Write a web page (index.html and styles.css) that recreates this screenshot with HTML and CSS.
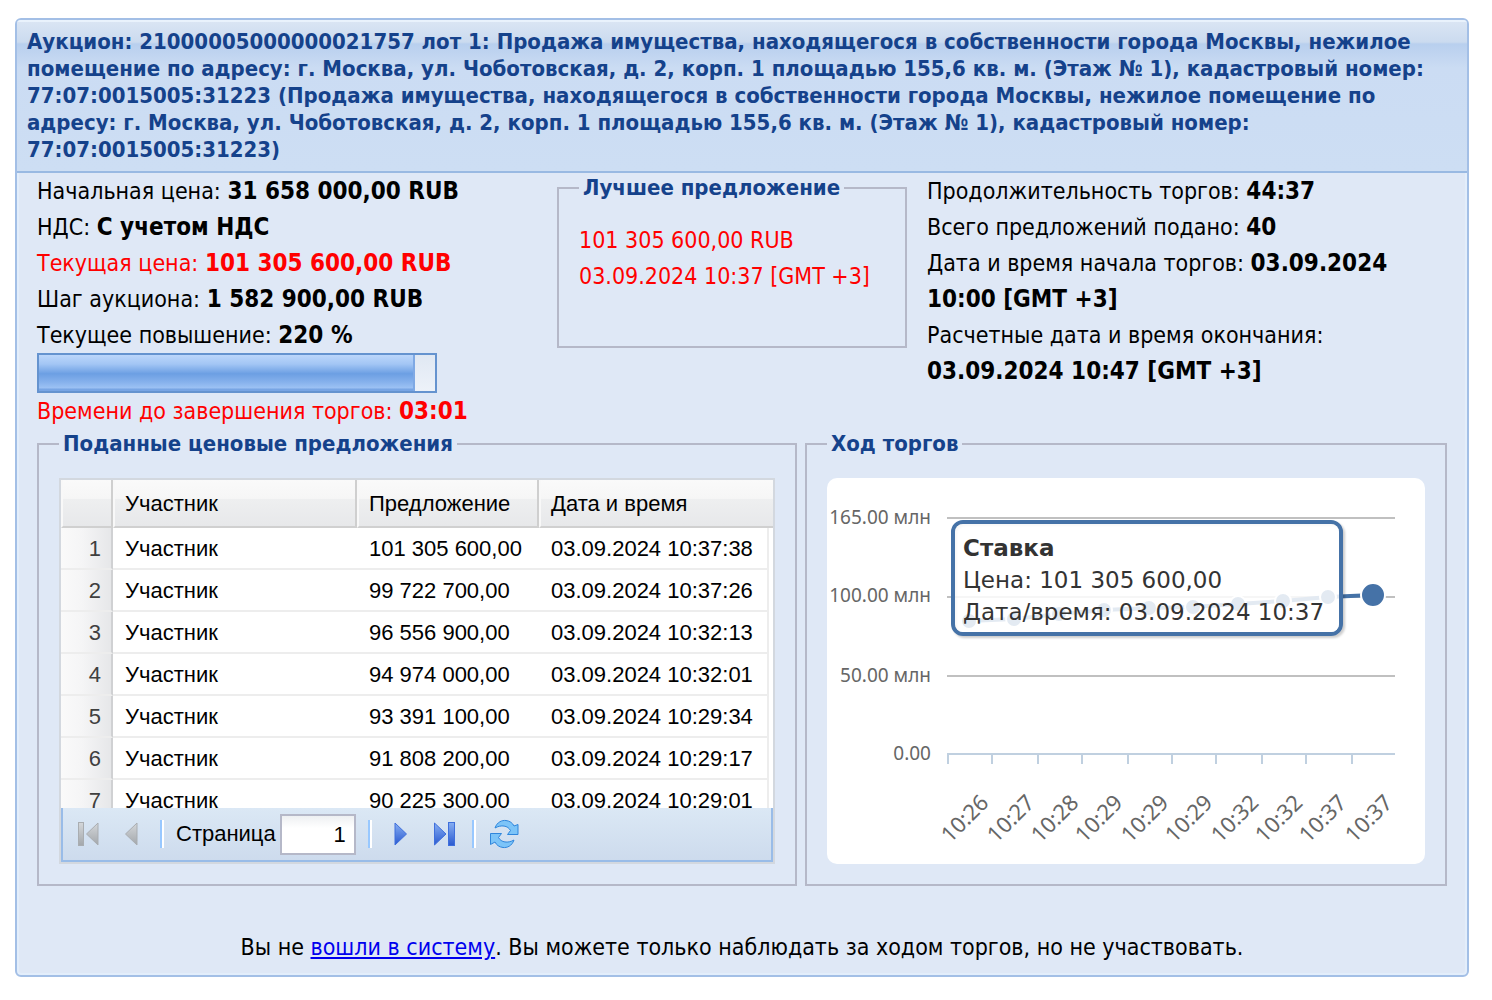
FILE: index.html
```html
<!DOCTYPE html>
<html lang="ru">
<head>
<meta charset="utf-8">
<title>Аукцион</title>
<link rel="stylesheet" href="styles.css">
</head>
<body>
<main class="panel">
  <h1 class="panel-title">Аукцион: 21000005000000021757 лот 1: Продажа имущества, находящегося в собственности города Москвы, нежилое помещение по адресу: г. Москва, ул. Чоботовская, д. 2, корп. 1 площадью 155,6 кв. м. (Этаж № 1), кадастровый номер: 77:07:0015005:31223 (Продажа имущества, находящегося в собственности города Москвы, нежилое помещение по адресу: г. Москва, ул. Чоботовская, д. 2, корп. 1 площадью 155,6 кв. м. (Этаж № 1), кадастровый номер: 77:07:0015005:31223)</h1>
  <div class="panel-body">
    <div class="summary">
      <section>
        <p>Начальная цена: <b>31 658 000,00 RUB</b></p>
        <p>НДС: <b>С учетом НДС</b></p>
        <p class="alert">Текущая цена: <b>101 305 600,00 RUB</b></p>
        <p>Шаг аукциона: <b>1 582 900,00 RUB</b></p>
        <p>Текущее повышение: <b>220 %</b></p>
        <div class="progress" role="progressbar" aria-label="Время торгов" aria-valuenow="95" aria-valuemin="0" aria-valuemax="100"><div class="progress-fill" style="width: 95%"></div></div>
        <p class="alert">Времени до завершения торгов: <b>03:01</b></p>
      </section>
      <fieldset class="box best">
        <legend>Лучшее предложение</legend>
        <p class="alert">101 305 600,00 RUB</p>
        <p class="alert">03.09.2024 10:37 [GMT +3]</p>
      </fieldset>
      <section>
        <p>Продолжительность торгов: <b>44:37</b></p>
        <p>Всего предложений подано: <b>40</b></p>
        <p>Дата и время начала торгов: <b>03.09.2024 10:00 [GMT +3]</b></p>
        <p>Расчетные дата и время окончания: <b>03.09.2024 10:47 [GMT +3]</b></p>
      </section>
    </div>
    <div class="details">
      <fieldset class="box">
        <legend>Поданные ценовые предложения</legend>
        <div class="grid">
          <div class="grid-view">
            <table>
              <colgroup><col class="c-num"><col class="c-name"><col class="c-bid"><col><col class="c-rest"></colgroup>
              <thead>
                <tr><th></th><th scope="col">Участник</th><th scope="col">Предложение</th><th scope="col" colspan="2">Дата и время</th></tr>
              </thead>
              <tbody>
                <tr><td class="num">1</td><td>Участник</td><td>101 305 600,00</td><td class="date">03.09.2024 10:37:38</td><td class="rest"></td></tr>
                <tr><td class="num">2</td><td>Участник</td><td>99 722 700,00</td><td class="date">03.09.2024 10:37:26</td><td class="rest"></td></tr>
                <tr><td class="num">3</td><td>Участник</td><td>96 556 900,00</td><td class="date">03.09.2024 10:32:13</td><td class="rest"></td></tr>
                <tr><td class="num">4</td><td>Участник</td><td>94 974 000,00</td><td class="date">03.09.2024 10:32:01</td><td class="rest"></td></tr>
                <tr><td class="num">5</td><td>Участник</td><td>93 391 100,00</td><td class="date">03.09.2024 10:29:34</td><td class="rest"></td></tr>
                <tr><td class="num">6</td><td>Участник</td><td>91 808 200,00</td><td class="date">03.09.2024 10:29:17</td><td class="rest"></td></tr>
                <tr><td class="num">7</td><td>Участник</td><td>90 225 300,00</td><td class="date">03.09.2024 10:29:01</td><td class="rest"></td></tr>
              </tbody>
            </table>
          </div>
          <div class="pager">
            <svg width="0" height="0" class="defs" aria-hidden="true">
              <defs>
                <linearGradient id="gray" x1="0" y1="0" x2="0" y2="1"><stop offset="0" stop-color="#d4d7da"/><stop offset="1" stop-color="#a3a7ab"/></linearGradient>
                <linearGradient id="blue" x1="0" y1="0" x2="0" y2="1"><stop offset="0" stop-color="#86aef2"/><stop offset="1" stop-color="#2b5ad0"/></linearGradient>
              </defs>
            </svg>
            <button type="button" disabled aria-label="Первая страница"><svg width="32" height="32" viewBox="0 0 32 32" stroke="#a9adb1" fill="url(#gray)"><rect x="6.500" y="4.500" width="5" height="23"/><path d="M26 5V27L14.500 16Z"/></svg></button>
            <button type="button" disabled aria-label="Предыдущая страница"><svg width="32" height="32" viewBox="0 0 32 32" stroke="#a9adb1" fill="url(#gray)"><path d="M21 5V27L9.500 16Z"/></svg></button>
            <span class="sep"></span>
            <label class="page">Страница <input type="text" value="1"></label>
            <span class="sep"></span>
            <button type="button" aria-label="Следующая страница"><svg width="32" height="32" viewBox="0 0 32 32" stroke="#3f6fdc" fill="url(#blue)"><path d="M11 5V27L22.500 16Z"/></svg></button>
            <button type="button" aria-label="Последняя страница"><svg width="32" height="32" viewBox="0 0 32 32" stroke="#3f6fdc" fill="url(#blue)"><path d="M6.500 5V27L18 16Z"/><rect x="20.500" y="4.500" width="6" height="23"/></svg></button>
            <span class="sep"></span>
            <button type="button" aria-label="Обновить"><svg width="32" height="32" viewBox="0 0 32 32" stroke="#2f86dc" fill="#7cc4f8" stroke-linejoin="round"><path d="M7 10C9 4 14 2 18 2.500C22 3 24.500 5 26 8L30 6.500V16.500H19.500L22.500 12.500C20 7.500 13 6.500 7 10Z"/><path d="M26 22C24 28 19 30 15 29.500C11 29 8.500 27 7 24L2.500 26.500V15.500H13.500L10.500 19.500C13 24.500 20 25.500 26 22Z"/></svg></button>
          </div>
        </div>
      </fieldset>
      <fieldset class="box">
        <legend>Ход торгов</legend>
        <svg class="chart" viewBox="0 0 598 386" role="img" aria-label="Ход торгов">
          <path class="gridline" d="M120 40H568M120 119H568M120 198H568"/>
          <path class="axis" d="M120 276H568M121 276V286M165 276V286M211 276V286M255 276V286M301 276V286M345 276V286M389 276V286M435 276V286M479 276V286M525 276V286"/>
          <g class="ylabels">
            <text x="104" y="46">165.00 млн</text>
            <text x="104" y="124">100.00 млн</text>
            <text x="104" y="204">50.00 млн</text>
            <text x="104" y="282">0.00</text>
          </g>
          <g class="xlabels">
            <text transform="translate(163 326) rotate(-45)">10:26</text>
            <text transform="translate(209 326) rotate(-45)">10:27</text>
            <text transform="translate(253 326) rotate(-45)">10:28</text>
            <text transform="translate(297 326) rotate(-45)">10:29</text>
            <text transform="translate(343 326) rotate(-45)">10:29</text>
            <text transform="translate(387 326) rotate(-45)">10:29</text>
            <text transform="translate(433 326) rotate(-45)">10:32</text>
            <text transform="translate(477 326) rotate(-45)">10:32</text>
            <text transform="translate(521 326) rotate(-45)">10:37</text>
            <text transform="translate(567 326) rotate(-45)">10:37</text>
          </g>
          <polyline class="series" points="142,143 187,141 232,136 277,132 322,130 366,129 411,126 456,123 501,119 546,117"/>
          <g class="dots">
            <circle cx="142" cy="143" r="8"/><circle cx="187" cy="141" r="8"/><circle cx="232" cy="136" r="8"/><circle cx="277" cy="132" r="8"/><circle cx="322" cy="130" r="8"/><circle cx="366" cy="129" r="8"/><circle cx="411" cy="126" r="8"/><circle cx="456" cy="123" r="8"/><circle cx="501" cy="119" r="8"/><circle cx="546" cy="117" r="12"/>
          </g>
          <g class="tip">
            <rect class="tip-frame" x="126" y="44" width="388" height="112" rx="10"/>
            <rect class="tip-fill" x="128" y="46" width="384" height="108" rx="8"/>
            <text x="136" y="78" font-weight="bold">Ставка</text>
            <text x="136" y="110">Цена: 101 305 600,00</text>
            <text x="136" y="142">Дата/время: 03.09.2024 10:37</text>
          </g>
        </svg>
      </fieldset>
    </div>
    <p class="note">Вы не <a href="#login">вошли в систему</a>. Вы можете только наблюдать за ходом торгов, но не участвовать.</p>
  </div>
</main>
</body>
</html>
```
FILE: styles.css
```css
* { box-sizing: border-box; }

body {
  margin: 18px 23px 18px 15px;
  background: #fff;
  color: #000;
  font: 23px/36px "DejaVu Sans Condensed", "Noto Sans", sans-serif;
}

p { margin: 0; }
b { font-size: 24px; line-height: 24px; }

.panel {
  border: 2px solid #a3bfe6;
  border-radius: 6px;
  background: #dfe8f6;
  box-shadow: inset 0 0 0 2px #e3eefb;
  overflow: hidden;
}

.panel-title {
  margin: 0;
  padding: 8px 24px 8px 10px;
  border-bottom: 2px solid #99b9e2;
  background: linear-gradient(#dbe6f4 0, #cbdbef 22px, #b8cfee 24px, #cbdcf3 48px, #cddef3 100%);
  box-shadow: inset 0 2px #e9f2fc;
  color: #15428b;
  font-size: 22px;
  line-height: 27px;
}

.panel-body { padding: 0 20px 10px; }

.summary {
  display: grid;
  grid-template-columns: 500fr 350fr 520fr;
  gap: 20px;
  align-items: start;
}

.alert { color: #f00; }

.progress {
  width: 80%;
  height: 40px;
  border: 2px solid #6593cf;
  background: linear-gradient(#e0e8f3, #edf2f9);
}
.progress-fill {
  height: 100%;
  border-right: 2px solid #7fa9e4;
  background: linear-gradient(#bcd6fa 0, #a3c6f5 25%, #6c9fe3 52%, #86b1ec 75%, #9dc2f4 92%, #78a5e4 94%);
}

.box {
  min-width: 0;
  margin: 0;
  padding: 19px 20px 20px;
  border: 2px solid #b5b8c8;
}
.box legend {
  padding: 0 4px;
  color: #15428b;
  font-size: 22px;
  font-weight: bold;
  line-height: 30px;
}
.best { min-height: 175px; }

.details {
  display: grid;
  grid-template-columns: 760fr 642fr;
  gap: 8px;
}

.grid {
  border: 2px solid #d3d8df;
  background: #fff;
  font: 22px/26px "Liberation Sans", Arial, sans-serif;
}
.grid-view { height: 328px; overflow: hidden; }
.grid table {
  width: 100%;
  border-collapse: separate;
  border-spacing: 0;
  table-layout: fixed;
}
.c-num { width: 52px; }
.c-name { width: 244px; }
.c-bid { width: 182px; }
.c-rest { width: 4px; }
.grid th, .grid td {
  padding: 2px 10px 0 12px;
  font-weight: normal;
  text-align: left;
  white-space: nowrap;
}
.grid th {
  height: 48px;
  padding-left: 10px;
  border-left: 2px solid #f8f8f8;
  border-right: 2px solid #cfcfcf;
  border-bottom: 2px solid #d0d0d0;
  background: linear-gradient(#fafafa 0, #f6f6f6 40%, #eeeff0 42%, #e7e8ea 100%);
}
.grid th:last-child { border-right: 0; }
.grid td {
  height: 42px;
  border-bottom: 2px solid #ededed;
}
.grid td.num {
  padding: 2px 10px 0 0;
  border-right: 2px solid #d0d1d3;
  background: linear-gradient(90deg, #fafafa 0, #f5f5f6 42%, #e6e7e9 100%);
  color: #3f3f3f;
  text-align: right;
}
.grid td.date { border-right: 2px solid #ededed; }
.grid td.rest { padding: 0; border: 0; }

.pager {
  display: flex;
  align-items: center;
  gap: 12px;
  height: 54px;
  padding-left: 9px;
  border: 2px solid #99bce8;
  border-top: 0;
  background: linear-gradient(#dbe8f5, #cddbed);
}
.defs { position: absolute; }
.pager button {
  display: grid;
  width: 32px;
  height: 32px;
  padding: 0;
  border: 0;
  background: none;
}
.sep {
  width: 4px;
  height: 28px;
  border-left: 2px solid #98c8ff;
  border-right: 2px solid #fff;
}
.page { display: flex; align-items: center; gap: 4px; }
.page input {
  width: 76px;
  height: 41px;
  padding: 2px 8px 0;
  border: 2px solid #b5b8c8;
  background: linear-gradient(#eef0f2, #fff 12px);
  font: inherit;
  text-align: right;
}

.chart {
  display: block;
  width: 100%;
  border-radius: 10px;
  background: #fff;
  font-family: "DejaVu Sans", sans-serif;
}
.gridline, .axis { fill: none; stroke: #c0c0c0; stroke-width: 2px; }
.axis { stroke: #c0d0e0; }
.ylabels, .xlabels {
  fill: #666;
  font-family: "Noto Sans", sans-serif;
  font-size: 19px;
  text-anchor: end;
}
.xlabels { font-size: 22px; }
.series { fill: none; stroke: #4572a7; stroke-width: 4px; }
.dots { fill: #4572a7; stroke: #fff; stroke-width: 2px; }
.tip-frame {
  fill: none;
  stroke: #4572a7;
  stroke-width: 4px;
  filter: drop-shadow(2px 2px 1px #0003);
}
.tip-fill { fill: #fff; fill-opacity: .85; }
.tip text { fill: #333; font-size: 23px; }

.note { margin-top: 43px; text-align: center; }
.note a { color: #00e; }
```
